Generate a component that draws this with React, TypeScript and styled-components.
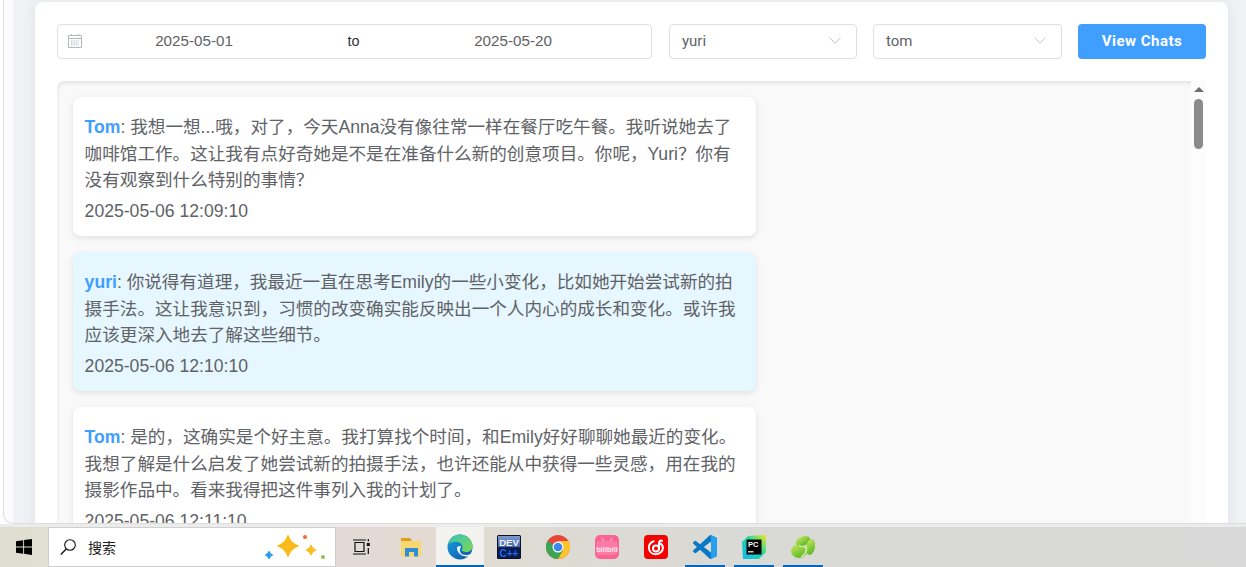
import React from "react";
import styled, { createGlobalStyle } from "styled-components";

const GlobalStyle = createGlobalStyle`
  html, body {
    margin: 0;
    padding: 0;
    height: 100%;
    overflow: hidden;
    background: #e6e6e6;
    font-family: "Liberation Sans", "Noto Sans CJK SC", sans-serif;
  }
  * { box-sizing: border-box; }
`;

const Screen = styled.div`
  width: 1246px;
  height: 567px;
  display: flex;
  flex-direction: column;
  overflow: hidden;
`;

const BrowserFrame = styled.div`
  height: 527px;
  flex: none;
  background: #ececec;
  overflow: hidden;
`;

const Viewport = styled.div`
  height: 524px;
  background: #fff;
  padding-left: 3px;
  overflow: hidden;
`;

const PageArea = styled.main`
  height: 100%;
  background: #fcfcfd;
  border-left: 1px solid #dcdcdc;
  border-bottom: 1px solid #dcdcdc;
  border-bottom-left-radius: 10px;
  padding-left: 9px;
  overflow: hidden;
`;

const Backdrop = styled.div`
  height: 100%;
  background: #f0f2f5;
  padding: 2px 18px 0 22px;
  overflow: hidden;
`;

const Card = styled.section`
  height: 640px;
  background: #fff;
  border-radius: 8px;
  box-shadow: 0 2px 14px rgba(60, 70, 110, 0.1);
  padding: 22px 22px 0;
`;

const FilterRow = styled.div`
  display: flex;
  height: 35px;
  margin-bottom: 22px;
`;

const DateRange = styled.div`
  width: 595px;
  display: flex;
  align-items: center;
  padding: 0 0 2px 10px;
  border: 1px solid #dcdfe6;
  border-radius: 4px;
  margin-right: 17px;
  color: #606266;
  font-size: 15.2px;
`;

const DateValue = styled.span`
  width: 224px;
  text-align: center;
`;

const DateSeparator = styled.span`
  width: 95px;
  text-align: center;
  color: #303133;
  font-size: 14.4px;
`;

const SelectBox = styled.div<{ $width: number; $gap: number }>`
  width: ${(p) => p.$width}px;
  margin-right: ${(p) => p.$gap}px;
  display: flex;
  align-items: center;
  justify-content: space-between;
  padding: 0 15px 2px 12px;
  border: 1px solid #dcdfe6;
  border-radius: 4px;
  color: #606266;
  font-family: Roboto, "Liberation Sans", sans-serif;
  font-size: 15px;
`;

const ViewButton = styled.button`
  width: 128px;
  border: 0;
  border-radius: 4px;
  padding: 0 0 1px;
  background: #409eff;
  color: #fff;
  font-family: Roboto, "Liberation Sans", sans-serif;
  font-size: 15px;
  font-weight: 700;
  letter-spacing: 0.5px;
`;

const ChatPanel = styled.div`
  display: flex;
  height: 600px;
  background: #f9f9f9;
  border-radius: 8px 0 0 0;
  box-shadow: inset 0 2px 4px rgba(0, 0, 0, 0.1);
`;

const MessageList = styled.div`
  flex: 1;
  padding: 16px;
  display: flex;
  flex-direction: column;
  gap: 16px;
`;

const Bubble = styled.article<{ $mine?: boolean }>`
  width: 683px;
  height: 139px;
  flex: none;
  padding: 17px 12px 0 11.6px;
  border-radius: 8px;
  background: ${(p) => (p.$mine ? "#e6f7ff" : "#fff")};
  box-shadow: 0 2px 6px rgba(0, 0, 0, 0.1);
  color: #606266;
  font-size: 17.6px;
  line-height: 26.67px;
`;

const Sender = styled.strong`
  color: #409eff;
  font-weight: 700;
`;

const MessageText = styled.p`
  margin: 0 0 4px;
`;

const Timestamp = styled.div`
  line-height: 26px;
`;

const ScrollRail = styled.div`
  width: 15px;
  flex: none;
  display: flex;
  flex-direction: column;
  align-items: center;
  padding-top: 6px;
  background: #fcfcfc;
`;

const ScrollArrow = styled.div`
  width: 0;
  height: 0;
  border-left: 5px solid transparent;
  border-right: 5px solid transparent;
  border-bottom: 5px solid #6e6e6e;
  margin-bottom: 7px;
`;

const ScrollThumb = styled.div`
  width: 9px;
  height: 50px;
  border-radius: 5px;
  background: #8a8a8a;
`;

const Taskbar = styled.footer`
  height: 40px;
  flex: none;
  display: flex;
  background: linear-gradient(90deg, #dedfd0 0, #e0dfd2 48px, #e4dad5 340px, #e4dad4 430px, #dddbd2 520px, #d9d9d6 760px, #d9d9d9 1246px);
`;

const StartButton = styled.div`
  width: 48px;
  display: flex;
  align-items: center;
  justify-content: center;
`;

const SearchBox = styled.div`
  width: 288px;
  height: 40px;
  margin-right: 1px;
  display: flex;
  align-items: center;
  gap: 12px;
  padding: 0 9px 0 11px;
  background: #fff;
  border: 1px solid #cfcfcf;
  font-family: "Noto Sans CJK SC", sans-serif;
  font-size: 14px;
  color: #222;
`;

const SearchLabel = styled.span`
  flex: 1;
`;

const TaskSlot = styled.div<{ $open?: boolean; $active?: boolean }>`
  position: relative;
  width: 49px;
  display: flex;
  align-items: center;
  justify-content: center;
  &::before {
    content: "";
    display: ${(p) => (p.$active ? "block" : "none")};
    position: absolute;
    top: 0;
    bottom: 0;
    left: 1px;
    right: 0;
    background: #f3f2ef;
  }
  &::after {
    content: "";
    display: ${(p) => (p.$open ? "block" : "none")};
    position: absolute;
    bottom: 0;
    left: ${(p) => (p.$active ? "1px" : "5px")};
    right: ${(p) => (p.$active ? "0" : "4px")};
    height: 2px;
    background: #0067c0;
  }
  & > svg {
    position: relative;
  }
`;

const WindowsIcon = () => (
  <svg width="16" height="16" viewBox="0 0 17 17" fill="#000">
    <path d="M0 2.400 7.600 1.200v6.800H0zM8.600 1 17 0v8H8.600zM0 9h7.600v6.800L0 14.600zM8.600 9H17v8l-8.400-1.200z" />
  </svg>
);

const SearchIcon = () => (
  <svg width="16" height="16" viewBox="0 0 16 16" fill="none" stroke="#111" strokeWidth="1.1">
    <circle cx="10" cy="6" r="5.300" />
    <path d="M6.200 10 .8 15.400" strokeWidth="1.400" />
  </svg>
);

const SparkleShape = ({ x, y, r, fill }: { x: number; y: number; r: number; fill: string }) => {
  const c = r * 0.24;
  return (
    <path
      fill={fill}
      stroke={fill}
      strokeWidth="1.2"
      strokeLinejoin="round"
      d={`M${x} ${y - r}Q${x + c} ${y - c} ${x + r} ${y}Q${x + c} ${y + c} ${x} ${y + r}Q${x - c} ${y + c} ${x - r} ${y}Q${x - c} ${y - c} ${x} ${y - r}Z`}
    />
  );
};

const Sparkles = () => (
  <svg width="62" height="32" viewBox="0 0 62 32">
    <SparkleShape x={24} y={15} r={10.500} fill="#f9bb1b" />
    <SparkleShape x={47} y={19} r={4.800} fill="#f9bf28" />
    <SparkleShape x={5} y={24} r={3.500} fill="#2b9bec" />
    <circle cx="41" cy="6" r="2" fill="#ef6a2f" />
    <circle cx="59" cy="26" r="2" fill="#8cc63f" />
  </svg>
);

const TaskViewIcon = () => (
  <svg width="17" height="16" viewBox="1 0 17 16" fill="none" stroke="#111" strokeWidth="1.2">
    <path d="M1 1h13M1 15h13" />
    <path d="M3 3v10M12 3v10M3 3.500h9M3 12.500h9" />
    <rect x="14.800" y="4" width="3" height="3" fill="#111" stroke="none" />
    <path d="M16.300 0v2.500M16.300 9v6" />
  </svg>
);

const FolderIcon = () => (
  <svg width="22" height="19" viewBox="0 0 22 19">
    <path d="M1 0h9l2 3h9v3H1z" fill="#dc9f1e" />
    <rect x="1" y="3" width="20" height="15.500" rx="1" fill="#f8d670" />
    <path d="M5 18.500V10h13v8.500h-4V14H9v4.500z" fill="#2e8ed8" />
  </svg>
);

const EdgeIcon = () => (
  <svg width="26" height="26" viewBox="0 0 26 26">
    <defs>
      <linearGradient id="edgeBlue" x1="0" y1="0" x2="1" y2="1">
        <stop offset="0" stopColor="#1aa1e0" />
        <stop offset="1" stopColor="#0b53a4" />
      </linearGradient>
      <linearGradient id="edgeGreen" x1="0" y1="0" x2="1" y2="1">
        <stop offset="0" stopColor="#36c2b4" />
        <stop offset="1" stopColor="#7fd858" />
      </linearGradient>
    </defs>
    <circle cx="13" cy="13" r="12.500" fill="url(#edgeBlue)" />
    <path d="M1 10C3 3 8 .5 13 .5c7 0 12.500 5.500 12.500 11.500 0 4-3 6-6.500 6-2.500 0-4.200-1-4.200-2.200 2.500-3-.5-8-5.500-8C5.500 7.800 2.500 8.800 1 10Z" fill="url(#edgeGreen)" />
    <path d="M10 14c0 5 5 9 10 8.500 2-.2 3-1.200 3.500-2.500-3 1.500-8.500 1.500-10-1.500-1-2-.8-4.500 1-6-2-.6-4.500-.5-4.500 1.500Z" fill="#fff" opacity="0.92" />
  </svg>
);

const DevCppIcon = () => (
  <svg width="24" height="24" viewBox="0 0 24 24" fontFamily="'Liberation Sans', sans-serif" fontWeight="700">
    <defs>
      <linearGradient id="devTop" x1="0" y1="0" x2="0" y2="1">
        <stop offset="0" stopColor="#7f9ad0" />
        <stop offset="1" stopColor="#3f63ad" />
      </linearGradient>
    </defs>
    <rect width="24" height="24" rx="1.500" fill="#0c1020" />
    <rect x="1" y="1" width="22" height="11.500" fill="url(#devTop)" />
    <text x="12" y="10.500" fontSize="9.500" fill="#f1f4fb" textAnchor="middle">DEV</text>
    <rect x="1" y="12.500" width="22" height="10.500" fill="#0b1a50" />
    <text x="12" y="21.500" fontSize="10" fill="#1f6be6" textAnchor="middle">C++</text>
  </svg>
);

const ChromeIcon = () => (
  <svg width="24" height="24" viewBox="0 0 24 24">
    <circle cx="12" cy="12" r="12" fill="#e9463a" />
    <path d="M12 12 1.600 6A12 12 0 0 0 12 24l5.200-9z" fill="#3aa655" />
    <path d="M12 6h10.400A12 12 0 0 1 12 24l5.200-9z" fill="#fbc42d" />
    <circle cx="12" cy="12" r="5.500" fill="#fff" />
    <circle cx="12" cy="12" r="4.300" fill="#3f86ee" />
  </svg>
);

const BilibiliIcon = () => (
  <svg width="24" height="24" viewBox="0 0 24 24">
    <rect width="24" height="24" rx="5" fill="#fb6394" />
    <path d="M6.500 3 9 6M17.500 3 15 6" stroke="#ff9dbb" strokeWidth="1.200" />
    <rect x="1.500" y="6" width="21" height="14" rx="3" fill="#fc7ba5" />
    <text x="12" y="16.500" fontSize="7.500" fontWeight="700" fill="#ffeaf0" textAnchor="middle" fontFamily="'Liberation Sans', sans-serif">bilibili</text>
  </svg>
);

const NeteaseIcon = () => (
  <svg width="24" height="24" viewBox="0 0 24 24" fill="none">
    <rect width="24" height="24" rx="4" fill="#f40000" />
    <circle cx="12" cy="13.500" r="3" stroke="#fff" strokeWidth="2" />
    <path d="M15 13.500V8.300c0-2.300 1.600-3.200 3-2.400M9.600 6.300C6.600 7.400 4.700 10 4.900 13c.3 3.800 3.400 6.300 7.100 6.200 3.700-.1 6.900-2.800 6.900-6.200 0-2-1.200-3.800-3-4.500" stroke="#fff" strokeWidth="2" strokeLinecap="round" />
  </svg>
);

const vsCodeLogo =
  "M23.150 2.587 18.210.21a1.494 1.494 0 0 0-1.705.29l-9.460 8.630-4.120-3.128a.999.999 0 0 0-1.276.057L.327 7.261A1 1 0 0 0 .326 8.740L3.899 12 .326 15.260a1 1 0 0 0 .001 1.479L1.650 17.940a.999.999 0 0 0 1.276.057l4.120-3.128 9.460 8.630a1.492 1.492 0 0 0 1.704.29l4.942-2.377A1.500 1.500 0 0 0 24 20.060V3.939a1.500 1.500 0 0 0-.85-1.352zm-5.146 14.861L10.826 12l7.178-5.448v10.896z";

const VsCodeIcon = () => (
  <svg width="24" height="24" viewBox="0 0 24 24">
    <defs>
      <clipPath id="vsShape">
        <path d={vsCodeLogo} />
      </clipPath>
    </defs>
    <path fill="#0a78c4" d={vsCodeLogo} />
    <rect x="18" width="6" height="24" fill="#26a0ee" clipPath="url(#vsShape)" />
  </svg>
);

const PyCharmIcon = () => (
  <svg width="24" height="24" viewBox="0 0 24 24">
    <defs>
      <linearGradient id="pcEdge" x1="0" y1="1" x2="1" y2="0">
        <stop offset="0" stopColor="#12b8f0" />
        <stop offset="0.55" stopColor="#1fd8a4" />
        <stop offset="1" stopColor="#f6e51e" />
      </linearGradient>
    </defs>
    <path d="M6 1 24 0v17l-7 7H1L0 7z" fill="url(#pcEdge)" />
    <rect x="4.500" y="4.500" width="15" height="15" fill="#000" />
    <text x="6" y="12" fontSize="7.500" fontWeight="700" fill="#fff" fontFamily="'Liberation Sans', sans-serif">PC</text>
    <rect x="6" y="16.200" width="5.500" height="1.200" fill="#fff" />
  </svg>
);

const GreenAppIcon = () => (
  <svg width="24" height="24" viewBox="0 0 24 24">
    <defs>
      <linearGradient id="leaf" x1="0" y1="0" x2="0.600" y2="1">
        <stop offset="0" stopColor="#c9ea6a" />
        <stop offset="1" stopColor="#5fb81f" />
      </linearGradient>
    </defs>
    <ellipse cx="8" cy="16" rx="8" ry="7" fill="url(#leaf)" />
    <ellipse cx="12" cy="6" rx="7.500" ry="4.500" fill="url(#leaf)" transform="rotate(-18 12 6)" />
    <ellipse cx="19.500" cy="12" rx="4.500" ry="8" fill="url(#leaf)" transform="rotate(12 19.500 12)" />
    <path d="M10 22c4-2 5.500-5.500 5.500-10" stroke="#f0f6d8" strokeWidth="1.200" fill="none" />
    <path d="M8 10c2 2 5 2 7.500 2" stroke="#f0f6d8" strokeWidth="1" fill="none" />
  </svg>
);

const CalendarSvg = styled.svg`
  flex: none;
`;

const CalendarIcon = () => (
  <CalendarSvg width="14" height="14" viewBox="0 0 14 14" fill="none" stroke="#b5b7bd" strokeWidth="1">
    <path d="M.5 1.500h13v12H.5zM.5 4.500h13" />
    <path d="M3.500 0v2M10.500 0v2" />
    <path d="M3 7h8M3 9h8M3 11h8" strokeDasharray="1.500 1" />
  </CalendarSvg>
);

const Chevron = () => (
  <svg width="12" height="7" viewBox="0 0 12 7" fill="none" stroke="#c0c4cc" strokeWidth="1">
    <path d="M.5.500 6 6.300 11.500.500" />
  </svg>
);

const messages = [
  {
    sender: "Tom",
    text: "我想一想...哦，对了，今天Anna没有像往常一样在餐厅吃午餐。我听说她去了咖啡馆工作。这让我有点好奇她是不是在准备什么新的创意项目。你呢，Yuri？你有没有观察到什么特别的事情？",
    time: "2025-05-06 12:09:10",
  },
  {
    sender: "yuri",
    text: "你说得有道理，我最近一直在思考Emily的一些小变化，比如她开始尝试新的拍摄手法。这让我意识到，习惯的改变确实能反映出一个人内心的成长和变化。或许我应该更深入地去了解这些细节。",
    time: "2025-05-06 12:10:10",
    mine: true,
  },
  {
    sender: "Tom",
    text: "是的，这确实是个好主意。我打算找个时间，和Emily好好聊聊她最近的变化。我想了解是什么启发了她尝试新的拍摄手法，也许还能从中获得一些灵感，用在我的摄影作品中。看来我得把这件事列入我的计划了。",
    time: "2025-05-06 12:11:10",
  },
];

const apps = [
  { key: "taskview", icon: <TaskViewIcon /> },
  { key: "folder", icon: <FolderIcon /> },
  { key: "edge", icon: <EdgeIcon />, open: true, active: true },
  { key: "dev", icon: <DevCppIcon /> },
  { key: "chrome", icon: <ChromeIcon /> },
  { key: "bilibili", icon: <BilibiliIcon /> },
  { key: "netease", icon: <NeteaseIcon /> },
  { key: "vscode", icon: <VsCodeIcon />, open: true },
  { key: "pycharm", icon: <PyCharmIcon />, open: true },
  { key: "green", icon: <GreenAppIcon />, open: true },
];

export default function App() {
  return (
    <>
      <GlobalStyle />
      <Screen>
        <BrowserFrame>
          <Viewport>
            <PageArea>
              <Backdrop>
                <Card>
                  <FilterRow>
                    <DateRange>
                      <CalendarIcon />
                      <DateValue>2025-05-01</DateValue>
                      <DateSeparator>to</DateSeparator>
                      <DateValue>2025-05-20</DateValue>
                    </DateRange>
                    <SelectBox $width={188} $gap={16}>
                      yuri
                      <Chevron />
                    </SelectBox>
                    <SelectBox $width={189} $gap={16}>
                      tom
                      <Chevron />
                    </SelectBox>
                    <ViewButton>View Chats</ViewButton>
                  </FilterRow>
                  <ChatPanel>
                    <MessageList>
                      {messages.map((m) => (
                        <Bubble key={m.time} $mine={m.mine}>
                          <MessageText>
                            <Sender>{m.sender}</Sender>: {m.text}
                          </MessageText>
                          <Timestamp>{m.time}</Timestamp>
                        </Bubble>
                      ))}
                    </MessageList>
                    <ScrollRail>
                      <ScrollArrow />
                      <ScrollThumb />
                    </ScrollRail>
                  </ChatPanel>
                </Card>
              </Backdrop>
            </PageArea>
          </Viewport>
        </BrowserFrame>
        <Taskbar>
          <StartButton>
            <WindowsIcon />
          </StartButton>
          <SearchBox>
            <SearchIcon />
            <SearchLabel>搜索</SearchLabel>
            <Sparkles />
          </SearchBox>
          {apps.map((a) => (
            <TaskSlot key={a.key} $open={a.open} $active={a.active}>
              {a.icon}
            </TaskSlot>
          ))}
        </Taskbar>
      </Screen>
    </>
  );
}
